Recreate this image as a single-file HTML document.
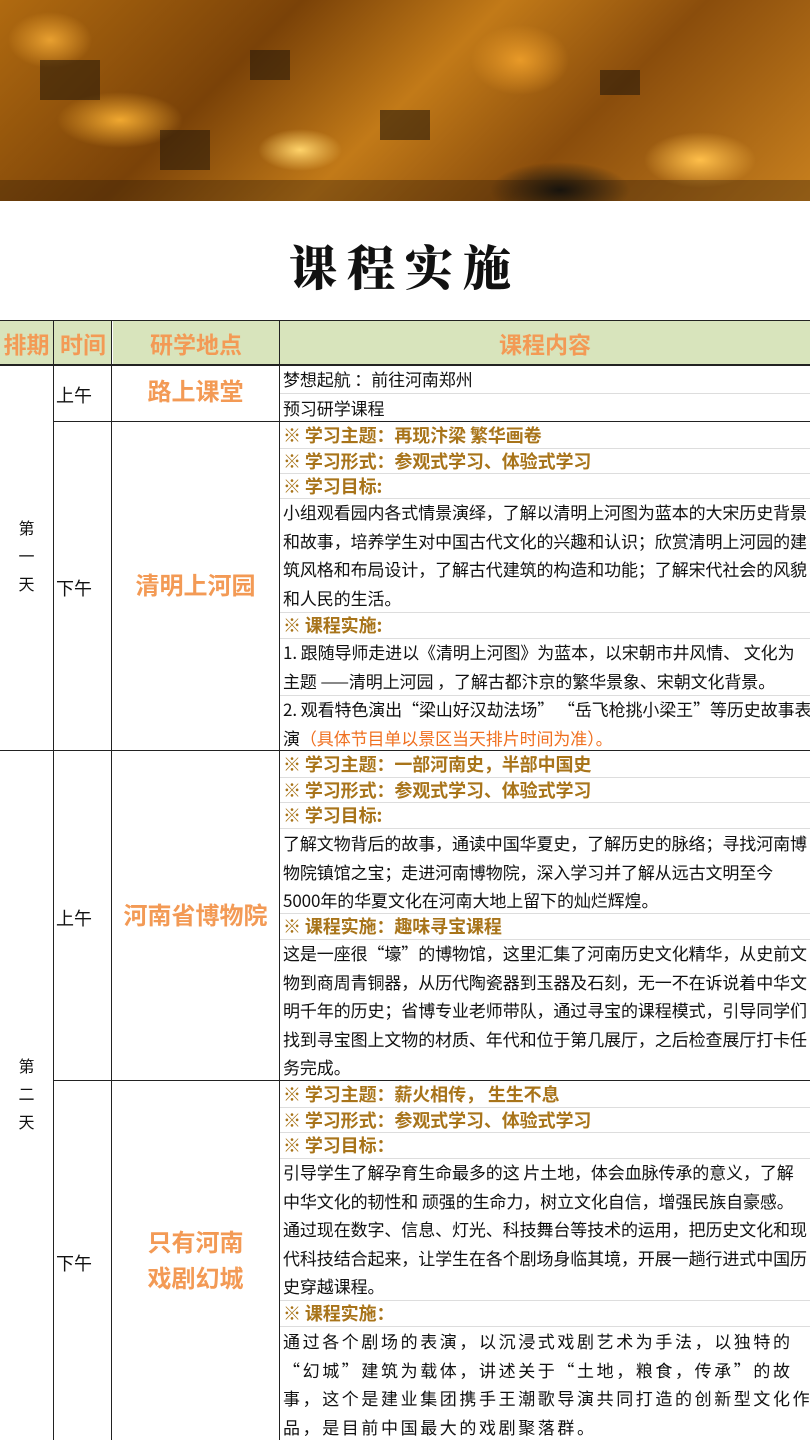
<!DOCTYPE html>
<html><head><meta charset="utf-8"><style>
*{margin:0;padding:0;box-sizing:border-box}
body{width:810px;height:1440px;overflow:hidden;background:#fff;position:relative;font-family:"Liberation Sans","Noto Sans CJK SC",sans-serif;color:#111}
.hero{position:absolute;left:0;top:0;width:810px;height:201px;overflow:hidden;
background:
radial-gradient(ellipse 60px 30px at 300px 150px,#ffd36a 0%,transparent 70%),
radial-gradient(ellipse 80px 40px at 700px 160px,#ffbf4a 0%,transparent 70%),
radial-gradient(ellipse 90px 40px at 120px 120px,#f0a830 0%,transparent 70%),
radial-gradient(ellipse 70px 50px at 520px 60px,#e89a28 0%,transparent 70%),
radial-gradient(ellipse 60px 40px at 50px 40px,#e8a030 0%,transparent 70%),
radial-gradient(ellipse 100px 40px at 560px 190px,#0d1010 0%,transparent 70%),
linear-gradient(135deg,#b06a10 0%,#7a4208 30%,#c27a18 50%,#8a4d0c 70%,#c8801e 100%)}
.hero i{position:absolute;background:#2a1a0a;opacity:.6}
.title{position:absolute;top:230px;left:0;width:810px;text-align:center;font-family:"Noto Serif CJK SC",serif;font-weight:900;font-size:48px;letter-spacing:10px;color:#111}
.hl{position:absolute;background:#222}
.hd{position:absolute;top:321px;height:44px;background:#d8e4bc;color:#f39a55;font-weight:bold;font-size:23px;display:flex;align-items:center;justify-content:center}
.sep{position:absolute;left:280px;width:530px;height:1px;background:#ddd}
.c{position:absolute;left:283px;width:527px;font-family:"Noto Sans CJK SC",sans-serif;font-size:17px;line-height:28.5px;white-space:nowrap;overflow:hidden;letter-spacing:-0.1px}
.b{color:#a8741a;font-weight:bold;font-size:18px;line-height:25.5px}
.loc{position:absolute;left:112px;width:167px;text-align:center;color:#f39a55;font-weight:bold;font-size:24px;line-height:36px}
.t{position:absolute;width:59px;left:53px;padding-left:3px;font-size:18px}
.d{position:absolute;left:0;width:53px;text-align:center;font-size:16px;line-height:28px}
.o{color:#f07020}
</style></head><body>
<div class="hero">
<i style="left:40px;top:60px;width:60px;height:40px"></i>
<i style="left:160px;top:130px;width:50px;height:40px"></i>
<i style="left:250px;top:50px;width:40px;height:30px"></i>
<i style="left:380px;top:110px;width:50px;height:30px"></i>
<i style="left:600px;top:70px;width:40px;height:25px"></i>
<i style="left:0;top:180px;width:810px;height:21px;opacity:.35"></i>
</div>
<div class="title">课程实施</div>

<div class="hd" style="left:0;width:53px">排期</div>
<div class="hd" style="left:54px;width:58px">时间</div>
<div class="hd" style="left:113px;width:166px">研学地点</div>
<div class="hd" style="left:280px;width:530px">课程内容</div>

<div class="hl" style="left:0;top:320px;width:810px;height:1px"></div>
<div class="hl" style="left:0;top:364px;width:810px;height:2px"></div>
<div class="hl" style="left:53px;top:421px;width:757px;height:1px"></div>
<div class="hl" style="left:0;top:750px;width:810px;height:1px"></div>
<div class="hl" style="left:53px;top:1080px;width:757px;height:1px"></div>
<div class="hl" style="left:53px;top:321px;width:1px;height:1119px"></div>
<div class="hl" style="left:111px;top:321px;width:1px;height:1119px"></div>
<div class="hl" style="left:279px;top:321px;width:1px;height:1119px"></div>

<div class="sep" style="top:393px"></div>
<div class="sep" style="top:448px"></div>
<div class="sep" style="top:473px"></div>
<div class="sep" style="top:498px"></div>
<div class="sep" style="top:612px"></div>
<div class="sep" style="top:638px"></div>
<div class="sep" style="top:695px"></div>
<div class="sep" style="top:777px"></div>
<div class="sep" style="top:802px"></div>
<div class="sep" style="top:828px"></div>
<div class="sep" style="top:913px"></div>
<div class="sep" style="top:939px"></div>
<div class="sep" style="top:1107px"></div>
<div class="sep" style="top:1132px"></div>
<div class="sep" style="top:1158px"></div>
<div class="sep" style="top:1300px"></div>
<div class="sep" style="top:1326px"></div>

<div class="d" style="top:516px">第<br>一<br>天</div>
<div class="d" style="top:1054px">第<br>二<br>天</div>
<div class="t" style="top:382px">上午</div>
<div class="t" style="top:575px">下午</div>
<div class="t" style="top:905px">上午</div>
<div class="t" style="top:1250px">下午</div>
<div class="loc" style="top:375px">路上课堂</div>
<div class="loc" style="top:569px">清明上河园</div>
<div class="loc" style="top:899px">河南省博物院</div>
<div class="loc" style="top:1226px">只有河南<br>戏剧幻城</div>

<div class="c" style="top:365px">梦想起航 ：前往河南郑州<br>预习研学课程</div>
<div class="c b" style="top:423px">※ 学习主题：再现汴梁 繁华画卷<br>※ 学习形式：参观式学习、体验式学习<br>※ 学习目标:</div>
<div class="c" style="top:498px">小组观看园内各式情景演绎，了解以清明上河图为蓝本的大宋历史背景<br>和故事，培养学生对中国古代文化的兴趣和认识；欣赏清明上河园的建<br>筑风格和布局设计，了解古代建筑的构造和功能；了解宋代社会的风貌<br>和人民的生活。</div>
<div class="c b" style="top:613px">※ 课程实施:</div>
<div class="c" style="top:638px">1. 跟随导师走进以《清明上河图》为蓝本，以宋朝市井风情、 文化为<br>主题 ——清明上河园 ，了解古都汴京的繁华景象、宋朝文化背景。<br>2. 观看特色演出“梁山好汉劫法场” “岳飞枪挑小梁王”等历史故事表<br>演<span class="o">（具体节目单以景区当天排片时间为准）。</span></div>

<div class="c b" style="top:752px">※ 学习主题：一部河南史，半部中国史<br>※ 学习形式：参观式学习、体验式学习<br>※ 学习目标:</div>
<div class="c" style="top:829px">了解文物背后的故事，通读中国华夏史，了解历史的脉络；寻找河南博<br>物院镇馆之宝；走进河南博物院，深入学习并了解从远古文明至今<br>5000年的华夏文化在河南大地上留下的灿烂辉煌。</div>
<div class="c b" style="top:914px">※ 课程实施：趣味寻宝课程</div>
<div class="c" style="top:939px">这是一座很“壕”的博物馆，这里汇集了河南历史文化精华，从史前文<br>物到商周青铜器，从历代陶瓷器到玉器及石刻，无一不在诉说着中华文<br>明千年的历史；省博专业老师带队，通过寻宝的课程模式，引导同学们<br>找到寻宝图上文物的材质、年代和位于第几展厅，之后检查展厅打卡任<br>务完成。</div>

<div class="c b" style="top:1082px">※ 学习主题：薪火相传， 生生不息<br>※ 学习形式：参观式学习、体验式学习<br>※ 学习目标：</div>
<div class="c" style="top:1158px">引导学生了解孕育生命最多的这 片土地，体会血脉传承的意义，了解<br>中华文化的韧性和 顽强的生命力，树立文化自信，增强民族自豪感。<br>通过现在数字、信息、灯光、科技舞台等技术的运用，把历史文化和现<br>代科技结合起来，让学生在各个剧场身临其境，开展一趟行进式中国历<br>史穿越课程。</div>
<div class="c b" style="top:1301px">※ 课程实施：</div>
<div class="c" style="top:1327px;letter-spacing:2.6px">通过各个剧场的表演，以沉浸式戏剧艺术为手法，以独特的<br>“幻城”建筑为载体，讲述关于“土地，粮食，传承”的故<br>事，这个是建业集团携手王潮歌导演共同打造的创新型文化作<br>品，是目前中国最大的戏剧聚落群。</div>
</body></html>
